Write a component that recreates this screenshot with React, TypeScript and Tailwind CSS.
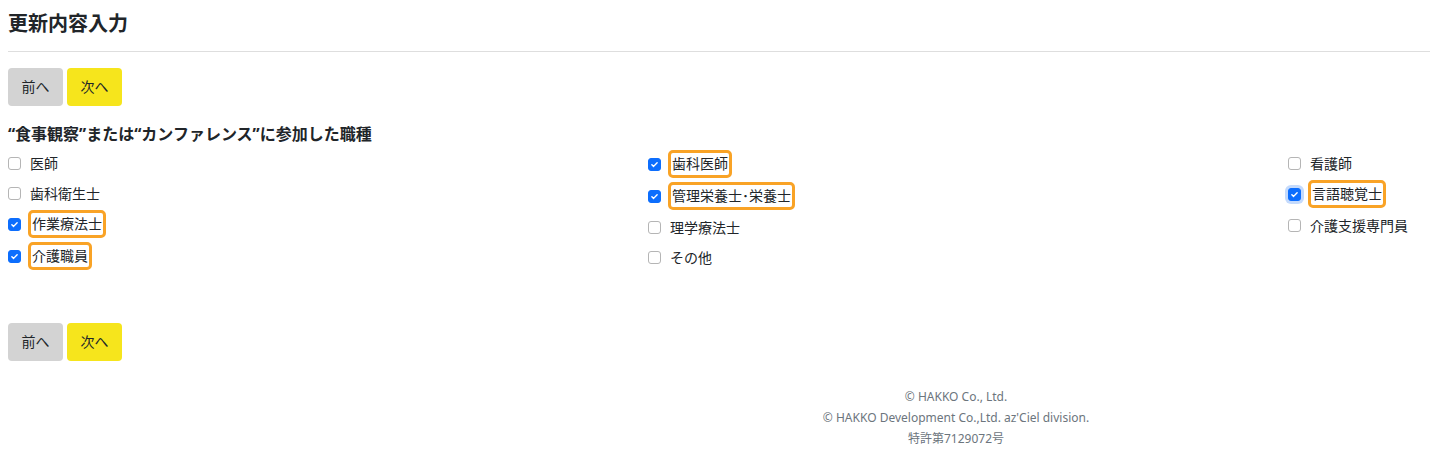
import { useState } from "react";

type Item = { label: string; checked: boolean; focused?: boolean };

const columns: Item[][] = [
  [
    { label: "医師", checked: false },
    { label: "歯科衛生士", checked: false },
    { label: "作業療法士", checked: true },
    { label: "介護職員", checked: true },
  ],
  [
    { label: "歯科医師", checked: true },
    { label: "管理栄養士･栄養士", checked: true },
    { label: "理学療法士", checked: false },
    { label: "その他", checked: false },
  ],
  [
    { label: "看護師", checked: false },
    { label: "言語聴覚士", checked: true, focused: true },
    { label: "介護支援専門員", checked: false },
  ],
];

function CheckBox({ checked, focused }: { checked: boolean; focused?: boolean }) {
  return (
    <span
      className={`flex h-[13px] w-[13px] shrink-0 items-center justify-center rounded-[3px] border ${
        checked ? "border-[#0d6efd] bg-[#0d6efd]" : "border-[#b5b5b5] bg-white"
      } ${focused ? "ring-[3px] ring-[#c4dafc]" : ""}`}
    >
      {checked && (
        <svg viewBox="0 0 12 12" className="h-[9px] w-[9px]">
          <path
            d="M2.5 6.2l2.3 2.3 4.7-4.9"
            fill="none"
            stroke="#fff"
            strokeWidth="1.9"
            strokeLinecap="round"
            strokeLinejoin="round"
          />
        </svg>
      )}
    </span>
  );
}

function Buttons() {
  return (
    <div className="flex gap-1">
      <button className="h-[38px] w-[55px] rounded-[4px] bg-[#d3d3d3] text-sm text-[#212529]">
        前へ
      </button>
      <button className="h-[38px] w-[55px] rounded-[4px] bg-[#f6e51c] text-sm text-[#212529]">
        次へ
      </button>
    </div>
  );
}

export default function App() {
  const [cols, setCols] = useState(columns);

  const toggle = (c: number, i: number) => {
    setCols((prev) =>
      prev.map((col, ci) =>
        ci !== c
          ? col
          : col.map((it, ii) => (ii === i ? { ...it, checked: !it.checked } : it))
      )
    );
  };

  return (
    <div
      className="min-h-[476px] bg-white text-[#212529]"
      style={{ fontFamily: '"Noto Sans", "Noto Sans CJK JP", sans-serif' }}
    >
      <h1 className="pl-2 pt-[10px] text-[20px] font-semibold leading-[28px]">
        更新内容入力
      </h1>
      <hr className="ml-2 mt-[13px] border-t border-[#dedede]" />

      <div className="pl-2 pt-4">
        <Buttons />
      </div>

      <div className="pl-2 pt-[16px]">
        <h2 className="text-base font-bold leading-[24px]">
          “食事観察”または“カンファレンス”に参加した職種
        </h2>
        <div className="mt-[2px] grid grid-cols-[640px_640px_1fr]">
          {cols.map((col, c) => (
            <div key={c} className="flex flex-col">
              {col.map((it, i) => (
                <label
                  key={it.label}
                  onClick={() => toggle(c, i)}
                  className={`flex cursor-pointer items-center gap-2 ${
                    it.checked ? "h-[32px]" : "h-[30px]"
                  }`}
                >
                  <CheckBox checked={it.checked} focused={it.focused} />
                  {it.checked ? (
                    <span className="-ml-[1px] rounded-[5px] border-[3px] border-[#f9a326] px-[1px] text-sm leading-[22px]">
                      {it.label}
                    </span>
                  ) : (
                    <span className="ml-[1px] text-sm leading-[21px]">{it.label}</span>
                  )}
                </label>
              ))}
            </div>
          ))}
        </div>
      </div>

      <div className="pl-2 pt-[51px]">
        <Buttons />
      </div>

      <footer className="pl-[482px] pt-[25px] text-center text-xs leading-[21px] text-[#6c757d]">
        <p>© HAKKO Co., Ltd.</p>
        <p>© HAKKO Development Co.,Ltd. az'Ciel division.</p>
        <p>特許第7129072号</p>
      </footer>
    </div>
  );
}
